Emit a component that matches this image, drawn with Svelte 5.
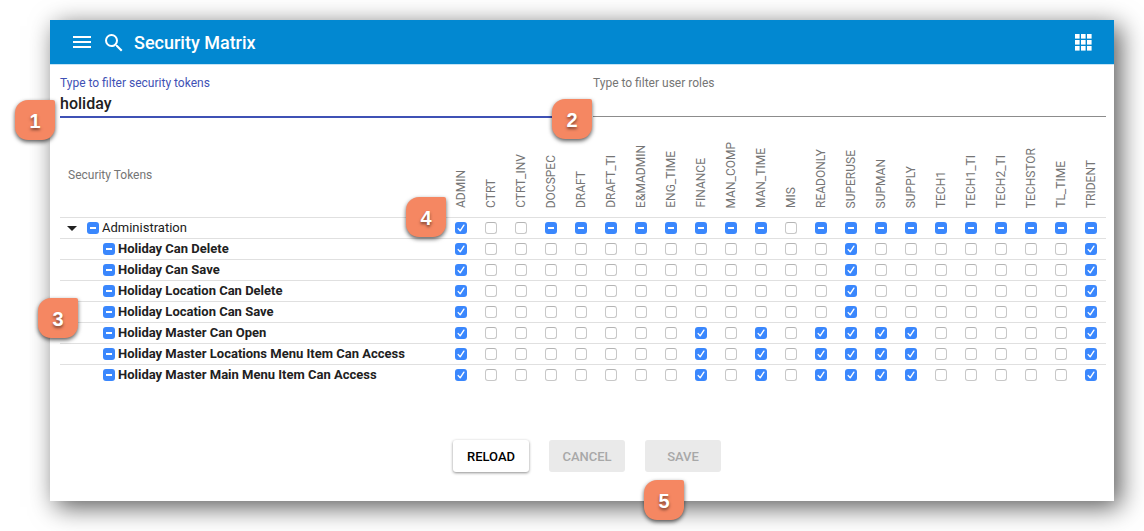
<script lang="ts">
  const roles = [
    'ADMIN', 'CTRT', 'CTRT_INV', 'DOCSPEC', 'DRAFT', 'DRAFT_TI', 'E&MADMIN', 'ENG_TIME',
    'FINANCE', 'MAN_COMP', 'MAN_TIME', 'MIS', 'READONLY', 'SUPERUSE', 'SUPMAN', 'SUPPLY',
    'TECH1', 'TECH1_TI', 'TECH2_TI', 'TECHSTOR', 'TL_TIME', 'TRIDENT'
  ];
  const basic = ['ADMIN', 'SUPERUSE', 'TRIDENT'];
  const wide = [...basic, 'FINANCE', 'MAN_TIME', 'READONLY', 'SUPMAN', 'SUPPLY'];
  const groupEmpty = ['CTRT', 'CTRT_INV', 'MIS'];

  const tokens = [
    { name: 'Holiday Can Delete', granted: basic },
    { name: 'Holiday Can Save', granted: basic },
    { name: 'Holiday Location Can Delete', granted: basic },
    { name: 'Holiday Location Can Save', granted: basic },
    { name: 'Holiday Master Can Open', granted: wide },
    { name: 'Holiday Master Locations Menu Item Can Access', granted: wide },
    { name: 'Holiday Master Main Menu Item Can Access', granted: wide }
  ];

  let tokenFilter = $state('holiday');
  let roleFilter = $state('');

  const isPartial = (granted: string[]) => granted.length > 0 && granted.length < roles.length;
</script>

<main class="panel">
  <header class="bar">
    <button class="icon" aria-label="Menu">
      <svg width="18" height="16" viewBox="0 0 18 16"><path d="M0 2h18M0 7h18M0 12h18" stroke="#fff" stroke-width="2" /></svg>
    </button>
    <button class="icon" aria-label="Search">
      <svg width="24" height="24" viewBox="0 0 24 24"><path fill="#fff" d="M15.5 14h-.79l-.28-.27A6.47 6.47 0 0 0 16 9.5 6.5 6.5 0 1 0 9.5 16c1.61 0 3.09-.59 4.23-1.57l.27.28v.79l5 4.99L20.49 19l-4.99-5zm-6 0C7.01 14 5 11.99 5 9.5S7.01 5 9.5 5 14 7.01 14 9.5 11.99 14 9.5 14z" /></svg>
    </button>
    <h1>Security Matrix</h1>
    <button class="icon apps" aria-label="Applications">
      <svg width="17" height="18" viewBox="0 0 17 18" fill="#fff">
        {#each [0, 6, 12] as y}
          {#each [0, 6, 12] as x}
            <rect {x} {y} width="4.6" height="4.6" />
          {/each}
        {/each}
      </svg>
    </button>
  </header>

  <section class="filters">
    <div class="field active">
      <label for="token-filter">Type to filter security tokens</label>
      <input id="token-filter" type="text" bind:value={tokenFilter} />
      <span class="badge b1">1</span>
    </div>
    <div class="field">
      <label for="role-filter">Type to filter user roles</label>
      <input id="role-filter" type="text" bind:value={roleFilter} />
      <span class="badge b2">2</span>
    </div>
  </section>

  <section class="matrix">
    <table>
      <thead>
        <tr>
          <th class="name" scope="col">Security Tokens</th>
          {#each roles as role}
            <th class="role" scope="col"><span>{role}</span></th>
          {/each}
        </tr>
      </thead>
      <tbody>
        <tr>
          <td class="name">
            <div class="group">
              <button class="toggle" aria-label="Collapse Administration"></button>
              <label><input type="checkbox" indeterminate={isPartial(wide)} />Administration</label>
            </div>
          </td>
          {#each roles as role}
            <td>
              <input
                type="checkbox"
                aria-label="Administration {role}"
                checked={role === 'ADMIN'}
                indeterminate={role !== 'ADMIN' && !groupEmpty.includes(role)}
              />
            </td>
          {/each}
        </tr>
        {#each tokens as token}
          <tr>
            <td class="name">
              <div class="token">
                <label><input type="checkbox" indeterminate={isPartial(token.granted)} />{token.name}</label>
              </div>
            </td>
            {#each roles as role}
              <td><input type="checkbox" aria-label="{token.name} {role}" checked={token.granted.includes(role)} /></td>
            {/each}
          </tr>
        {/each}
      </tbody>
    </table>
    <span class="badge b3">3</span>
    <span class="badge b4">4</span>
  </section>

  <footer class="actions">
    <button class="action">RELOAD</button>
    <button class="action" disabled>CANCEL</button>
    <div class="save">
      <button class="action" disabled>SAVE</button>
      <span class="badge b5">5</span>
    </div>
  </footer>
</main>

<style>
  :global(body) {
    background: #fff;
  }
  .panel {
    margin: 20px 30px 30px 50px;
    background: #fff;
    box-shadow: 6px 6px 24px rgba(0, 0, 0, 0.66);
    font-family: Roboto, sans-serif;
    color: #212121;
  }
  button {
    border: 0;
    padding: 0;
    background: none;
    font-family: inherit;
  }
  .bar {
    display: flex;
    align-items: center;
    box-sizing: border-box;
    height: 45px;
    padding: 2px 22px 0 23px;
    background: #0288d1;
    border-bottom: 1px solid #c5e4f5;
  }
  .icon {
    display: flex;
  }
  .icon + .icon {
    margin-left: 11px;
  }
  h1 {
    margin: 0 0 0 8px;
    font-size: 18px;
    line-height: 24px;
    font-weight: 500;
    color: #fff;
  }
  .bar .apps {
    margin-left: auto;
  }
  .filters {
    display: flex;
    gap: 20px;
    padding: 10px 8px 0 10px;
  }
  .field {
    position: relative;
    flex: 1;
    display: flex;
    flex-direction: column;
  }
  .field label {
    font-size: 12px;
    line-height: 16px;
    color: #757575;
  }
  .field input {
    height: 26px;
    box-sizing: border-box;
    border: 0;
    border-bottom: 1px solid #8c8c8c;
    border-radius: 0;
    padding: 0;
    outline: 0;
    background: none;
    font: 500 16px/20px Roboto, sans-serif;
    color: #212121;
  }
  .field.active label {
    color: #3f51b5;
  }
  .field.active input {
    height: 27px;
    border-bottom: 2px solid #3f51b5;
  }
  .matrix {
    position: relative;
    padding: 0 8px 0 10px;
  }
  table {
    width: 100%;
    table-layout: fixed;
    border-collapse: separate;
    border-spacing: 0;
  }
  th {
    height: 99px;
    padding: 0;
    font-size: 12px;
    font-weight: 400;
    color: #757575;
  }
  th.name {
    padding: 15px 0 0 8px;
    height: 84px;
    text-align: left;
  }
  th.role {
    width: 30px;
    vertical-align: bottom;
  }
  .role span {
    display: inline-block;
    vertical-align: bottom;
    margin-bottom: 9px;
    writing-mode: vertical-rl;
    transform: rotate(180deg);
    line-height: 16px;
    white-space: nowrap;
  }
  td {
    height: 20px;
    padding: 0;
    border-top: 1px solid #e0e0e0;
    text-align: center;
    line-height: 0;
  }
  td.name {
    text-align: left;
  }
  .group,
  .token {
    display: flex;
    align-items: center;
    font-size: 13px;
    line-height: 20px;
  }
  .group {
    gap: 10px;
    padding-left: 7px;
  }
  .token {
    padding-left: 43px;
    font-weight: 700;
  }
  .name label {
    display: flex;
    align-items: center;
    gap: 3px;
    white-space: nowrap;
  }
  .toggle {
    width: 0;
    height: 0;
    border: 5px solid transparent;
    border-top-color: #212121;
    border-bottom: 0;
  }
  input[type='checkbox'] {
    appearance: none;
    flex: none;
    width: 12px;
    height: 12px;
    margin: 0;
    box-sizing: border-box;
    border: 1px solid #c8c8c8;
    border-top-color: #b4b4b4;
    border-radius: 3px;
    background: #fff center / 12px 12px no-repeat;
    vertical-align: middle;
  }
  input[type='checkbox']:checked,
  input[type='checkbox']:indeterminate {
    border: 0;
    background-color: #3a87fd;
  }
  input[type='checkbox']:checked {
    background-image: url("data:image/svg+xml,%3Csvg xmlns='http://www.w3.org/2000/svg' viewBox='0 0 12 12'%3E%3Cpath d='M3.2 6.6l2 2.2L8.9 3.2' fill='none' stroke='white' stroke-width='1.4' stroke-linecap='round' stroke-linejoin='round'/%3E%3C/svg%3E");
  }
  input[type='checkbox']:indeterminate {
    background-image: linear-gradient(#fff, #fff);
    background-size: 6px 2px;
  }
  .actions {
    display: flex;
    justify-content: center;
    gap: 20px;
    padding: 55px 0 29px 10px;
  }
  .action {
    width: 76px;
    height: 32px;
    border-radius: 3px;
    background: #fff;
    box-shadow: 0 1px 3px rgba(0, 0, 0, 0.45);
    font-size: 13px;
    font-weight: 500;
    color: #000;
  }
  .action:disabled {
    background: #eaeaea;
    box-shadow: none;
    color: #a8a8a8;
  }
  .save {
    position: relative;
  }
  .badge {
    position: absolute;
    z-index: 1;
    width: 40px;
    height: 40px;
    border-radius: 13px 2px 13px 13px;
    background: #f58762;
    box-shadow: 0 2px 4px rgba(0, 0, 0, 0.65);
    font: 700 20px/42px "Liberation Sans", sans-serif;
    text-align: center;
    color: #fff;
    text-shadow: 0 2px 3px rgba(0, 0, 0, 0.5);
  }
  .b1 {
    left: -45px;
    top: 25px;
  }
  .b2 {
    left: -41px;
    top: 24px;
  }
  .b3 {
    left: -12px;
    top: 180px;
  }
  .b4 {
    left: 356px;
    top: 79px;
  }
  .b5 {
    left: -1px;
    top: 40px;
  }
</style>
